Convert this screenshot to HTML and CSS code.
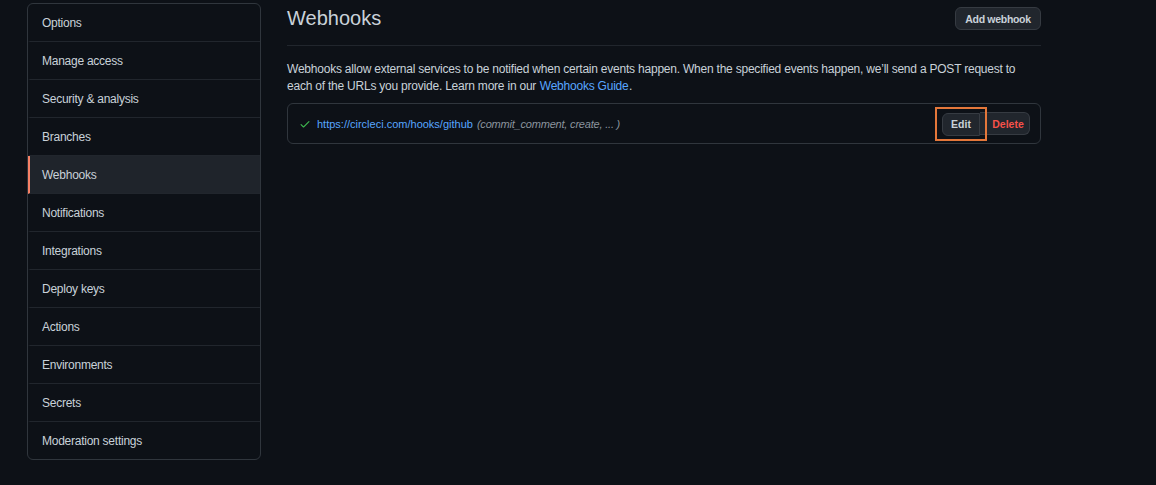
FILE: index.html
```html
<!DOCTYPE html>
<html>
<head>
<meta charset="utf-8">
<link rel="stylesheet" href="styles.css">
</head>
<body>
<div class="layout">
  <nav class="menu">
    <a class="menu-item">Options</a>
    <a class="menu-item">Manage access</a>
    <a class="menu-item">Security &amp; analysis</a>
    <a class="menu-item">Branches</a>
    <a class="menu-item selected">Webhooks</a>
    <a class="menu-item">Notifications</a>
    <a class="menu-item">Integrations</a>
    <a class="menu-item">Deploy keys</a>
    <a class="menu-item">Actions</a>
    <a class="menu-item">Environments</a>
    <a class="menu-item">Secrets</a>
    <a class="menu-item">Moderation settings</a>
  </nav>
  <main class="main">
    <div class="subhead">
      <h2 class="subhead-title">Webhooks</h2>
      <button class="btn btn-sm add-btn">Add webhook</button>
    </div>
    <p class="desc">Webhooks allow external services to be notified when certain events happen. When the specified events happen, we’ll send a POST request to each of the URLs you provide. Learn more in our <a class="link guide">Webhooks Guide</a>.</p>
    <div class="hook-box">
      <div class="hook-info">
        <svg class="check" width="12" height="12" viewBox="0 0 16 16"><path fill="#3fb950" d="M13.78 4.22a.75.75 0 0 1 0 1.06l-7.25 7.25a.75.75 0 0 1-1.06 0L2.22 9.28a.75.75 0 0 1 1.06-1.06L6 10.94l6.72-6.72a.75.75 0 0 1 1.06 0Z"/></svg>
        <a class="link hook-url">https://circleci.com/hooks/github</a>
        <span class="hook-events">(commit_comment, create, ... )</span>
      </div>
      <div class="btn-group">
        <span class="highlight">
          <button class="btn btn-sm group-first">Edit</button>
        </span>
        <button class="btn btn-sm group-last danger">Delete</button>
      </div>
    </div>
  </main>
</div>
</body>
</html>
```

FILE: styles.css
```css
* { box-sizing: border-box; }
html, body {
  margin: 0;
  background: #0d1117;
  color: #c9d1d9;
  font-family: "Liberation Sans", Arial, sans-serif;
  height: 100%;
}
.layout {
  display: flex;
  align-items: flex-start;
  padding-left: 27px;
  gap: 26px;
}
.menu {
  width: 234px;
  margin-top: 3px;
  border: 1px solid #30363d;
  border-radius: 6px;
  display: flex;
  flex-direction: column;
  overflow: hidden;
}
.menu-item {
  height: 38px;
  display: flex;
  align-items: center;
  padding-left: 12px;
  font-size: 12px;
  letter-spacing: -0.25px;
  color: #c9d1d9;
  border-bottom: 1px solid #21262d;
  border-left: 2px solid transparent;
}
.menu-item:last-child { border-bottom: 0; height: 37px; }
.menu-item.selected {
  background: #1f242b;
  border-left-color: #f78166;
}
.main {
  width: 754px;
}
.subhead {
  display: flex;
  align-items: center;
  justify-content: space-between;
  height: 46px;
  border-bottom: 1px solid #21262d;
  padding-bottom: 8px;
}
.subhead-title {
  margin: 0;
  font-size: 20px;
  font-weight: 400;
  color: #c9d1d9;
}
.btn {
  font-family: inherit;
  background: #21262d;
  color: #c9d1d9;
  border: 1px solid #363b42;
  border-radius: 6px;
  font-weight: 600;
  cursor: pointer;
}
.btn-sm {
  height: 23px;
  font-size: 10.5px;
  padding: 0 10px;
}
.add-btn {
  letter-spacing: -0.3px;
  width: 86px;
  padding: 0;
}
.desc {
  margin: 15px 0 8px;
  font-size: 12px;
  letter-spacing: -0.22px;
  line-height: 17px;
}
.link { color: #58a6ff; text-decoration: none; }
.guide { margin: 0 0.5px; }
.hook-box {
  border: 1px solid #30363d;
  border-radius: 6px;
  height: 41px;
  display: flex;
  align-items: center;
  justify-content: space-between;
  padding: 0 10px 0 11px;
}
.hook-info {
  display: flex;
  align-items: center;
  font-size: 11px;
}
.check { margin-right: 6px; }
.hook-events {
  font-style: italic;
  color: #8b949e;
  margin-left: 4px;
  letter-spacing: -0.2px;
}
.btn-group {
  display: flex;
  align-items: center;
}
.highlight {
  display: inline-flex;
  padding: 4px 5px 3px 5px;
  border: 2px solid #e4773a;
  margin-right: -7px;
  position: relative;
  z-index: 1;
}
.group-first {
  border-radius: 6px 0 0 6px;
  width: 38px;
  padding: 0;
}
.group-last {
  border-radius: 0 6px 6px 0;
  border-left: 0;
  width: 50px;
  padding: 0;
  padding-left: 7px;
}
.danger { color: #f85149; }
```
